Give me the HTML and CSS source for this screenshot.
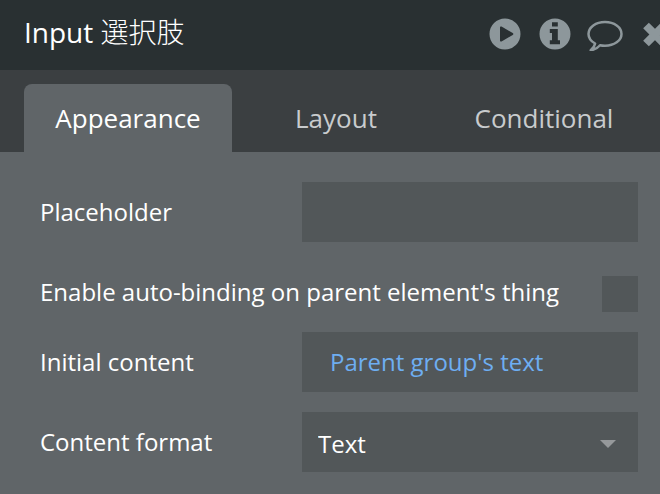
FILE: index.html
```
<!DOCTYPE html>
<html lang="en">
<head>
    <meta charset="UTF-8">
    <meta name="viewport" content="width=device-width, initial-scale=1.0">
    <title>Input 選択肢</title>
    <link rel="stylesheet" href="styles.css">
</head>
<body>
    <div class="property-editor">
        <header class="header">
            <h1 class="title">Input <span class="name" lang="ja">選択肢</span></h1>
            <div class="actions">
                <button class="icon-button" type="button" aria-label="Preview">
                    <svg width="34" height="34" viewBox="0 0 34 34">
                        <path fill-rule="evenodd" d="M17 1.500a15.500 15.500 0 1 0 0 31a15.500 15.500 0 0 0 0-31zM13.500 9.600c-.8-.5-1.500 0-1.500.9v13c0 .9.7 1.400 1.500.9l11.200-6.400c.9-.5.9-1.500 0-2z"/>
                    </svg>
                </button>
                <button class="icon-button" type="button" aria-label="Info">
                    <svg width="34" height="34" viewBox="0 0 34 34">
                        <path fill-rule="evenodd" d="M17 1.500a15.500 15.500 0 1 0 0 31a15.500 15.500 0 0 0 0-31zM14 5.200h5.800v4.300h-5.800zM11.800 12h8v11.300h2.200v4h-10.200v-4h2.200v-7.300h-2.200z"/>
                    </svg>
                </button>
                <button class="icon-button" type="button" aria-label="Comments">
                    <svg width="36" height="34" viewBox="0 0 36 34">
                        <path class="outline" d="M18 5C8.800 5 1.500 10.200 1.500 17c0 4 2.500 7.200 6.600 9.500C7.600 29.500 6 31.500 3.700 33.300c4-.6 7-2.400 9.300-5.100c1.600.4 3.200.5 5 .5c9.200 0 16.500-5.100 16.500-11.800S27.200 5 18 5z"/>
                    </svg>
                </button>
                <button class="icon-button" type="button" aria-label="Close">
                    <svg width="34" height="34" viewBox="0 0 34 34">
                        <path class="cross" d="M8 8.500L26 26.500M26 8.500L8 26.500"/>
                    </svg>
                </button>
            </div>
        </header>

        <nav class="tabs">
            <button class="tab active" type="button">Appearance</button>
            <button class="tab" type="button">Layout</button>
            <button class="tab" type="button">Conditional</button>
        </nav>

        <form class="properties">
            <div class="row">
                <label for="placeholder">Placeholder</label>
                <input class="field" id="placeholder" type="text">
            </div>
            <div class="row checkbox-row">
                <label for="autobinding">Enable auto-binding on parent element's thing</label>
                <input class="checkbox" id="autobinding" type="checkbox">
            </div>
            <div class="row">
                <label for="initial">Initial content</label>
                <input class="field expression" id="initial" type="text" value="Parent group's text">
            </div>
            <div class="row">
                <label for="format">Content format</label>
                <div class="dropdown">
                    <select class="field" id="format">
                        <option>Text</option>
                    </select>
                    <svg class="arrow" width="16" height="8" viewBox="0 0 16 8"><path d="M0 0h16l-8 8z"/></svg>
                </div>
            </div>
        </form>
    </div>
</body>
</html>
```
FILE: styles.css
```
* {
    margin: 0;
    padding: 0;
    box-sizing: border-box;
}

body {
    min-height: 100vh;
    background-color: #606568;
    font-family: 'Open Sans', 'Noto Sans CJK JP', sans-serif;
    color: white;
    overflow-x: hidden;
}

button,
input,
select {
    border: none;
    font-family: inherit;
    color: inherit;
}

/* Header */
.header {
    display: flex;
    justify-content: space-between;
    align-items: center;
    height: 70px;
    padding: 0 0 2px 24px;
    background-color: #293032;
    overflow: hidden;
}

.title {
    font-size: 28px;
    font-weight: 400;
    line-height: 40px;
    padding-bottom: 4px;
}

.title .name {
    font-weight: 300;
}

/* the close button runs past the right edge */
.actions {
    display: flex;
    gap: 16px;
    margin-right: -12px;
}

.icon-button {
    display: flex;
    justify-content: center;
    width: 34px;
    height: 34px;
    background: none;
    cursor: pointer;
}

.icon-button svg {
    flex: none;
    fill: #8d979b;
}

.icon-button .outline {
    fill: none;
    stroke: #8d979b;
    stroke-width: 2.5;
    stroke-linejoin: round;
}

.icon-button .cross {
    fill: none;
    stroke: #8d979b;
    stroke-width: 8;
}

/* Tabs */
.tabs {
    display: flex;
    padding: 14px 12px 0 24px;
    background-color: #3b3f41;
}

.tab {
    flex: 1 1 0;
    height: 68px;
    border-radius: 8px 8px 0 0;
    background: none;
    font-size: 26px;
    color: #c8cbcd;
    cursor: pointer;
}

.tab.active {
    background-color: #606568;
    color: white;
}

/* Properties */
.properties {
    display: flex;
    flex-direction: column;
    gap: 20px;
    padding: 30px 22px 22px 40px;
    font-size: 24px;
}

.row {
    display: grid;
    grid-template-columns: 262px 1fr;
    align-items: center;
    line-height: 32px;
}

.checkbox-row {
    grid-template-columns: 1fr 36px;
    align-items: start;
    margin-top: 14px;
}

.field {
    width: 100%;
    height: 60px;
    padding: 0 16px 2px;
    background-color: #525759;
    font-size: 24px;
}

.expression {
    padding: 0 28px 2px;
    color: #6eaef2;
}

.checkbox {
    appearance: none;
    width: 36px;
    height: 36px;
    background-color: #525759;
}

.dropdown {
    position: relative;
}

select.field {
    display: block;
    appearance: none;
    padding-top: 4px;
}

.arrow {
    position: absolute;
    top: 28px;
    right: 22px;
    fill: #96999b;
    pointer-events: none;
}
```
